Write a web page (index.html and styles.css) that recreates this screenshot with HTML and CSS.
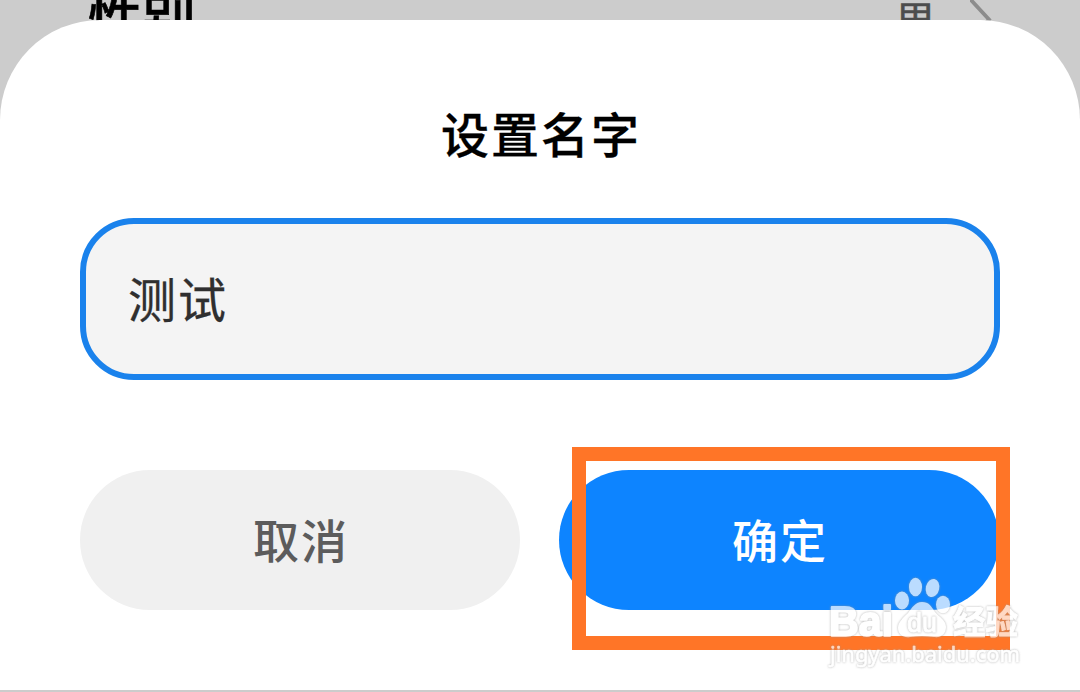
FILE: index.html
```
<!DOCTYPE html>
<html lang="zh-CN">
<head>
<meta charset="utf-8">
<title>设置名字</title>
<link rel="stylesheet" href="styles.css">
</head>
<body>
	<div class="page">
		<div class="row">
			<span class="row-label">性别</span>
			<span class="row-value">男</span>
			<svg class="row-arrow" width="24" height="42" viewBox="0 0 24 42">
				<path d="M1 1L19 20.500L1 40" fill="none" stroke="#8c8c8c" stroke-width="3.8" stroke-linecap="round"/>
			</svg>
		</div>

		<form class="dialog" action="#">
			<h1 class="title">设置名字</h1>
			<input class="field" type="text" value="测试">
			<div class="buttons">
				<button class="btn btn-cancel" type="button">取消</button>
				<button class="btn btn-ok" type="submit">确定</button>
			</div>
		</form>

		<div class="highlight"></div>

		<svg class="watermark" width="210" height="100" viewBox="0 0 210 100">
			<g class="paw">
				<ellipse cx="82" cy="30.500" rx="7" ry="9"/>
				<ellipse cx="95.500" cy="17" rx="6.500" ry="9.300"/>
				<ellipse cx="112.500" cy="18" rx="6.700" ry="9.200" transform="rotate(12 112.500 18)"/>
				<ellipse cx="123" cy="34.500" rx="7" ry="8.800"/>
				<path d="M102 32C95 32 92 38 88 43C83 48 78 52 78 58C78 65 84 68 90 67C98 66 106 66 114 67C121 68 126 64 126 57C126 50 119 47 115 42C111 36 109 32 102 32Z"/>
			</g>
			<text class="wm-brand" x="9" y="65.500" textLength="64" lengthAdjust="spacingAndGlyphs">Bai</text>
			<text class="wm-du" x="87" y="62" textLength="30" lengthAdjust="spacingAndGlyphs">du</text>
			<text class="wm-cn" x="133" y="63.500" textLength="65" lengthAdjust="spacingAndGlyphs">经验</text>
			<text class="wm-url" x="10" y="92" textLength="190" lengthAdjust="spacingAndGlyphs">jingyan.baidu.com</text>
		</svg>
	</div>
</body>
</html>
```
FILE: styles.css
```
body {
	margin: 0;
	font-family: "Noto Sans CJK SC", sans-serif;
}

.page {
	position: relative;
	width: 1080px;
	height: 692px;
	overflow: hidden;
	background: #ccc;
}

/* settings row behind the dialog */
.row {
	display: flex;
	height: 20px;
	padding: 0 86px 0 88px;
}

.row-label {
	margin-top: -23px;
	font-size: 54px;
	font-weight: 500;
	line-height: 80px;
	color: #000;
	-webkit-text-stroke: 0.6px #000;
}

.row-value {
	margin: -12px 34px 0 auto;
	font-size: 41px;
	line-height: 60px;
	color: #4d4d4d;
	-webkit-text-stroke: 0.5px #4d4d4d;
}

.row-arrow {
	margin-top: -1px;
}

.dialog {
	position: relative;
	box-sizing: border-box;
	height: 670px;
	padding: 76px 80px 0;
	background: #fff;
	border-radius: 100px 100px 0 0;
}

.title {
	margin: 0;
	padding-left: 2px;
	font-size: 48px;
	font-weight: 500;
	line-height: 72px;
	letter-spacing: 2px;
	text-align: center;
	color: #000;
	-webkit-text-stroke: 0.3px #000;
}

.field {
	display: block;
	box-sizing: border-box;
	width: 920px;
	height: 162px;
	margin-top: 50px;
	padding: 0 42px 4px;
	border: 6px solid #1a82ec;
	border-radius: 54px;
	outline: none;
	background: #f4f4f4;
	font: 48px "Noto Sans CJK SC", sans-serif;
	letter-spacing: 2px;
	color: #2f2f2f;
	-webkit-text-stroke: 0.3px #2f2f2f;
}

.buttons {
	display: flex;
	gap: 39px;
	margin-top: 90px;
}

.btn {
	width: 440px;
	height: 140px;
	padding: 0 0 4px 2px;
	border: 0;
	border-radius: 70px;
	font: 500 46px "Noto Sans CJK SC", sans-serif;
	letter-spacing: 2px;
}

.btn-cancel {
	background: #f0f0f0;
	color: #5c5c5c;
}

.btn-ok {
	background: #0d84ff;
	color: #fff;
}

.highlight {
	position: absolute;
	left: 572px;
	top: 447px;
	box-sizing: border-box;
	width: 438px;
	height: 203px;
	border: 14px solid #ff7527;
}

.watermark {
	position: absolute;
	left: 820px;
	top: 570px;
	opacity: 0.72;
}

.paw,
.watermark text {
	fill: #fff;
	stroke: #fff;
	stroke-linejoin: round;
	filter: drop-shadow(0 0 0.8px #999);
}

.paw {
	stroke: none;
}

.watermark .wm-brand {
	font: bold 43px "Liberation Sans", sans-serif;
	stroke-width: 2px;
}

.watermark .wm-du {
	font: 27px "Liberation Sans", sans-serif;
	stroke-width: 1px;
}

.watermark .wm-cn {
	font: bold 33px "Noto Sans CJK SC", sans-serif;
	stroke-width: 1px;
}

.watermark .wm-url {
	font: 22px "Noto Sans", sans-serif;
	stroke-width: 0.6px;
}
```
